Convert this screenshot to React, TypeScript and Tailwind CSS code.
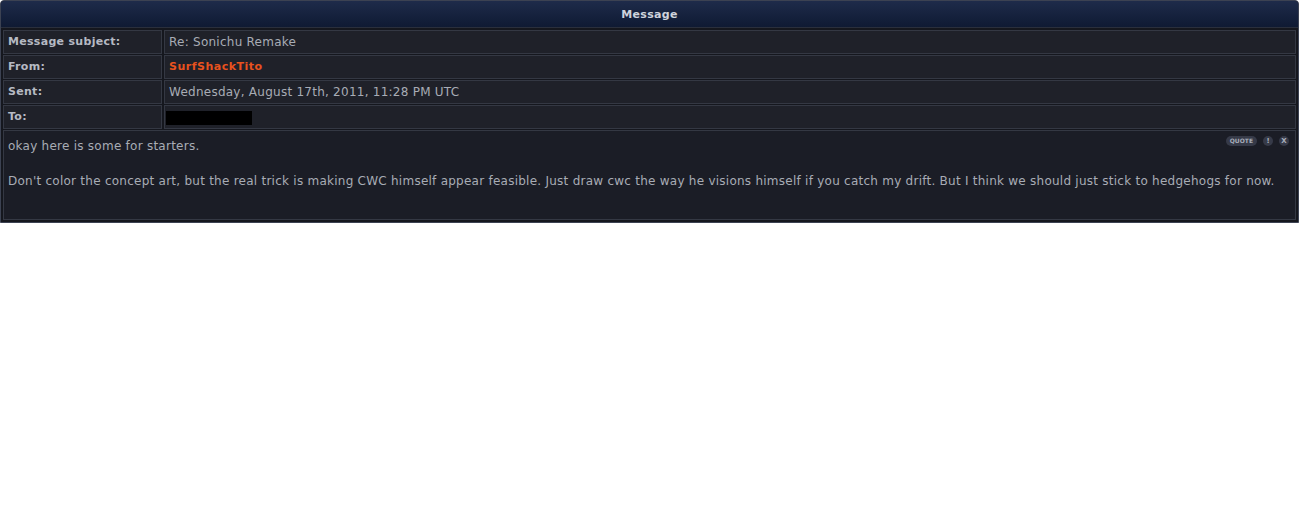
import React from "react";

const font = { fontFamily: '"DejaVu Sans", Verdana, sans-serif' };

function Row({ label, children }: { label: string; children: React.ReactNode }) {
  return (
    <div className="flex gap-[2px] h-[24px]">
      <div className="w-[159px] shrink-0 border border-[#343843] bg-[#1f2129] flex items-center pl-[4px] text-[11px] font-bold tracking-[0.3px] text-[#b6bac3]">
        {label}
      </div>
      <div className="flex-1 border border-[#343843] bg-[#1f2129] flex items-center pl-[4px] text-[12px] tracking-[0.25px] text-[#a8acb5]">
        {children}
      </div>
    </div>
  );
}

export default function App() {
  return (
    <div className="bg-white w-[1303px] h-[525px]" style={font}>
      <div className="w-[1299px] border border-[#3c4252] rounded-t-[4px] bg-[#15171e] overflow-hidden">
        <div className="h-[27px] pt-[2px] bg-gradient-to-b from-[#1e2b4a] to-[#0f1a33] flex items-center justify-center text-[11px] font-bold tracking-[0.3px] text-[#cfd3dc] border-b border-[#2a2f3c]">
          Message
        </div>
        <div className="flex flex-col gap-[1px] px-[2px] pt-[2px] pb-[2px]">
          <Row label="Message subject:">Re: Sonichu Remake</Row>
          <Row label="From:">
            <span className="font-bold text-[11px] tracking-[0.5px] text-[#e8521e]">SurfShackTito</span>
          </Row>
          <Row label="Sent:">Wednesday, August 17th, 2011, 11:28 PM UTC</Row>
          <Row label="To:">
            <span className="inline-block w-[86px] h-[14px] bg-black -ml-[3px] mt-[1px]" />
          </Row>
          <div className="relative h-[90px] border border-[#343843] bg-[#1b1d26] px-[4px] pt-[5px] text-[12px] tracking-[0.25px] text-[#a8acb5] leading-[20px]">
            <div className="absolute right-[6px] top-[5px] flex items-center gap-[6px] tracking-normal">
              <span className="h-[10px] px-[4px] rounded-full bg-[#363a48] text-[6px] leading-[10px] text-[#a9aebb] font-bold">QUOTE</span>
              <span className="w-[10px] h-[10px] rounded-full bg-[#363a48] text-[7px] leading-[10px] text-center text-[#a9aebb] font-bold">!</span>
              <span className="w-[10px] h-[10px] rounded-full bg-[#363a48] text-[7px] leading-[10px] text-center text-[#a9aebb] font-bold">X</span>
            </div>
            <div>okay here is some for starters.</div>
            <div className="mt-[15px]">
              Don't color the concept art, but the real trick is making CWC himself appear feasible. Just draw cwc the way he visions himself if you catch my drift. But I think we should just stick to hedgehogs for now.
            </div>
          </div>
        </div>
      </div>
    </div>
  );
}
